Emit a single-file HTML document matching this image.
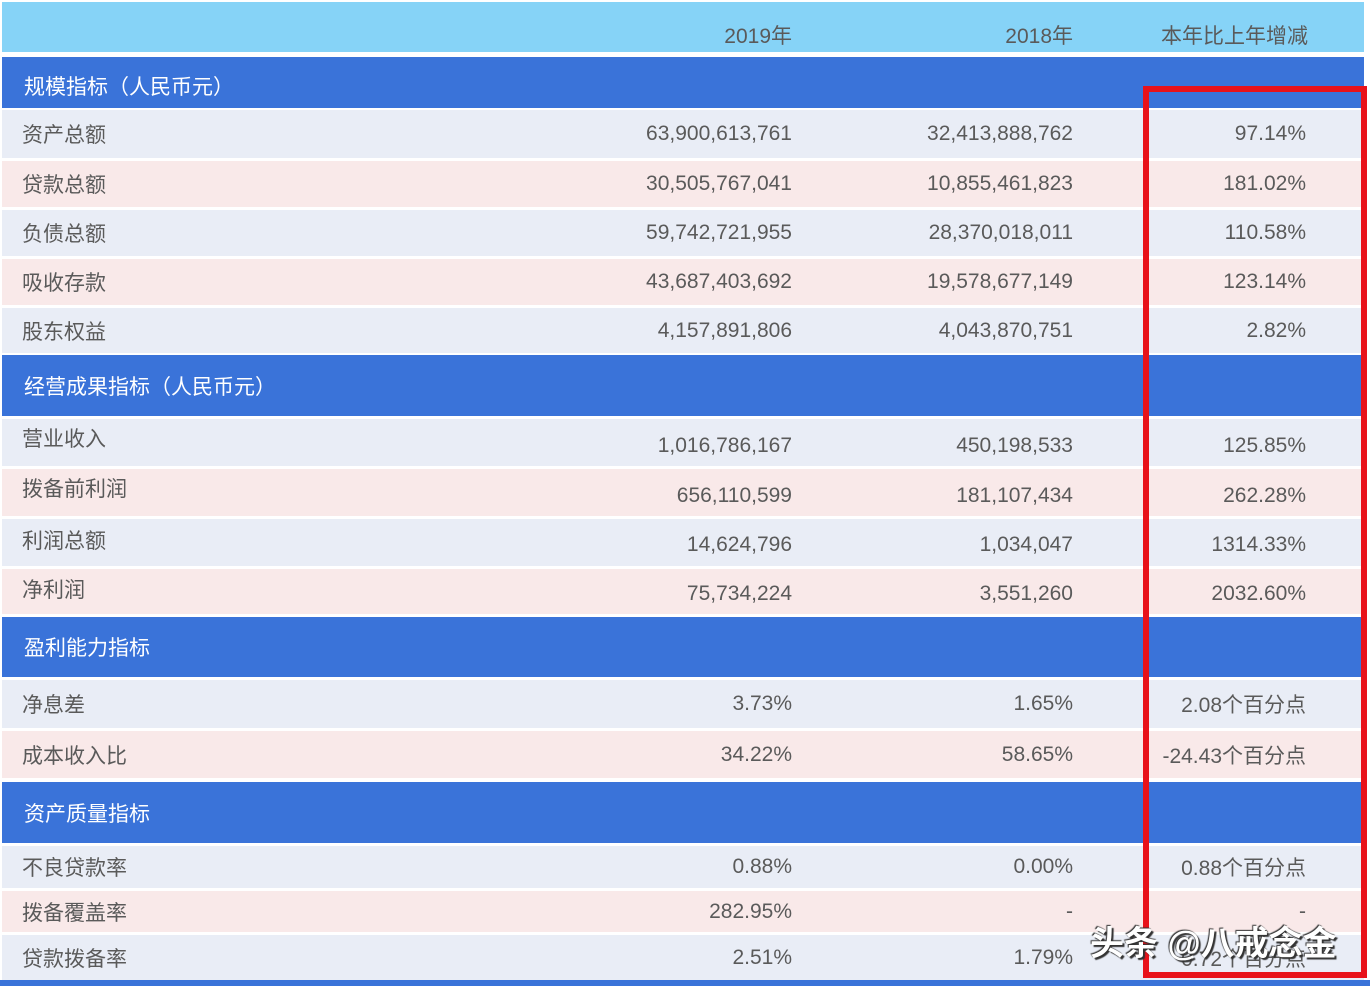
<html><head><style>
body{margin:0;width:1370px;height:986px;background:#fff;position:relative;overflow:hidden;font-family:"Liberation Sans","Noto Sans CJK SC",sans-serif;}
.r{position:absolute;left:2px;width:1362px;font-size:21px;color:#5a5a5a;}
.r span{position:absolute;top:50%;transform:translateY(-50%);white-space:nowrap}
.l{left:20px}.a{right:572px}.b{right:291px}.c{right:58px}
.h{background:#86d3f7}.s{background:#3a73d9;color:#fff}.s .l{left:22px}
.w{background:#e9edf6}.p{background:#f9e9e9}
</style></head><body>
<div class="r h" style="top:2px;height:50px"><span class="a" style="top:66%">2019年</span><span class="b" style="top:66%">2018年</span><span class="c" style="right:56px;top:66%">本年比上年增减</span></div>
<div class="r s" style="top:57px;height:51px"><span class="l" style="top:56%">规模指标（人民币元）</span></div>
<div class="r w" style="top:110px;height:48px"><span class="l">资产总额</span><span class="a">63,900,613,761</span><span class="b">32,413,888,762</span><span class="c">97.14%</span></div>
<div class="r p" style="top:161px;height:46px"><span class="l">贷款总额</span><span class="a">30,505,767,041</span><span class="b">10,855,461,823</span><span class="c">181.02%</span></div>
<div class="r w" style="top:210px;height:46px"><span class="l">负债总额</span><span class="a">59,742,721,955</span><span class="b">28,370,018,011</span><span class="c">110.58%</span></div>
<div class="r p" style="top:259px;height:46px"><span class="l">吸收存款</span><span class="a">43,687,403,692</span><span class="b">19,578,677,149</span><span class="c">123.14%</span></div>
<div class="r w" style="top:308px;height:45px"><span class="l">股东权益</span><span class="a">4,157,891,806</span><span class="b">4,043,870,751</span><span class="c">2.82%</span></div>
<div class="r s" style="top:355px;height:61px"><span class="l">经营成果指标（人民币元）</span></div>
<div class="r w" style="top:419px;height:47px"><span class="l" style="top:40%">营业收入</span><span class="a" style="top:58%">1,016,786,167</span><span class="b" style="top:58%">450,198,533</span><span class="c" style="top:58%">125.85%</span></div>
<div class="r p" style="top:469px;height:47px"><span class="l" style="top:40%">拨备前利润</span><span class="a" style="top:58%">656,110,599</span><span class="b" style="top:58%">181,107,434</span><span class="c" style="top:58%">262.28%</span></div>
<div class="r w" style="top:519px;height:47px"><span class="l" style="top:45%">利润总额</span><span class="a" style="top:55%">14,624,796</span><span class="b" style="top:55%">1,034,047</span><span class="c" style="top:55%">1314.33%</span></div>
<div class="r p" style="top:569px;height:45px"><span class="l" style="top:45%">净利润</span><span class="a" style="top:55%">75,734,224</span><span class="b" style="top:55%">3,551,260</span><span class="c" style="top:55%">2032.60%</span></div>
<div class="r s" style="top:617px;height:60px"><span class="l">盈利能力指标</span></div>
<div class="r w" style="top:680px;height:48px"><span class="l">净息差</span><span class="a">3.73%</span><span class="b">1.65%</span><span class="c">2.08个百分点</span></div>
<div class="r p" style="top:731px;height:47px"><span class="l">成本收入比</span><span class="a">34.22%</span><span class="b">58.65%</span><span class="c">-24.43个百分点</span></div>
<div class="r s" style="top:782px;height:61px"><span class="l">资产质量指标</span></div>
<div class="r w" style="top:846px;height:42px"><span class="l">不良贷款率</span><span class="a">0.88%</span><span class="b">0.00%</span><span class="c">0.88个百分点</span></div>
<div class="r p" style="top:891px;height:41px"><span class="l">拨备覆盖率</span><span class="a">282.95%</span><span class="b">-</span><span class="c">-</span></div>
<div class="r w" style="top:935px;height:45px"><span class="l">贷款拨备率</span><span class="a">2.51%</span><span class="b">1.79%</span><span class="c">0.72个百分点</span></div>
<div style="position:absolute;left:0;top:980px;width:1370px;height:6px;background:#3a73d9"></div>
<div style="position:absolute;left:1143px;top:86px;width:212px;height:880px;border:6px solid #e8121a"></div>
<div style="position:absolute;left:1090px;top:916px;font-size:34px;color:#fff;text-shadow:2px 2px 1px #333,-1px -1px 1px #333;font-weight:bold">头条 @八戒念金</div>
</body></html>
